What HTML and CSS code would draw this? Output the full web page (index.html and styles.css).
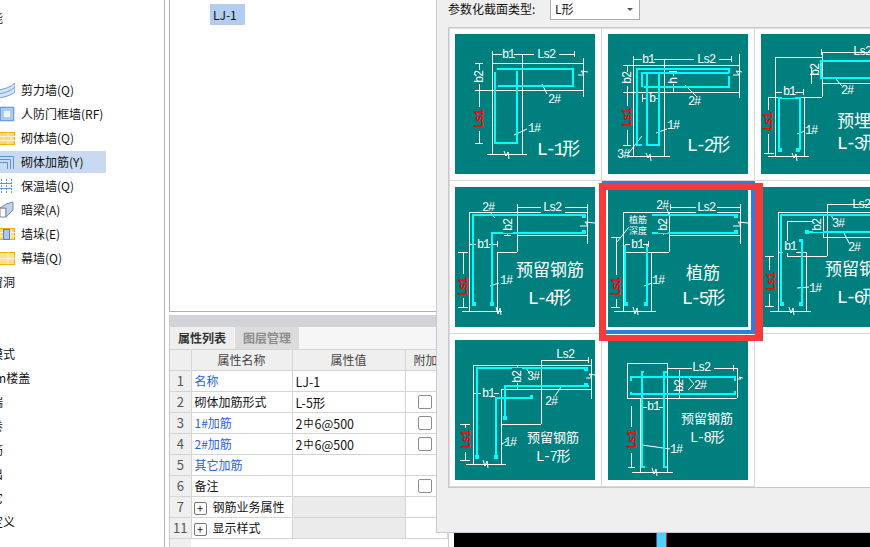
FILE: index.html
```html
<!DOCTYPE html>
<html lang="zh-CN">
<head>
<meta charset="utf-8">
<title>砌体加筋</title>
<link rel="stylesheet" href="styles.css">
</head>
<body>
<aside class="tree">
  <div class="row clip-a">能</div>
  <div class="row"></div>
  <div class="row"></div>
  <div class="row"><span class="item"><svg class="ico" viewBox="0 0 15 18"><path class="i-blue" d="M-2 9C5 8 11 6 15 2V11C11 14 6 16-2 17Z"/><path class="i-line" d="M-2 13C5 12 11 10 15 6"/></svg>剪力墙(Q)</span></div>
  <div class="row"><span class="item"><svg class="ico" viewBox="0 0 15 18"><rect class="i-frame" x="0.5" y="2.5" width="13" height="13"/><rect class="i-inner" x="3" y="5" width="8" height="8"/></svg>人防门框墙(RF)</span></div>
  <div class="row"><span class="item"><svg class="ico" viewBox="0 0 15 18"><rect class="i-brick" x="-1" y="3.500" width="15.500" height="12"/><path class="i-mortar" d="M-1 7.500H15M-1 11.500H15M8 3.500V7.500M4 7.500V11.500M11 7.500V11.500M8 11.500V15.500"/></svg>砌体墙(Q)</span></div>
  <div class="row"><span class="item sel"><svg class="ico" viewBox="0 0 15 18"><path class="i-rebar" d="M-1 3.500H13.500V16M-1 6.500H10.500V16M-1 9.500H7.500V16"/></svg>砌体加筋(Y)</span></div>
  <div class="row"><span class="item"><svg class="ico" viewBox="0 0 15 18"><path class="i-dots" d="M1.500 2V16M6.500 2V16M11.500 2V16"/><path class="i-rebar" d="M-1 6.500H12M-1 11.500H12"/></svg>保温墙(Q)</span></div>
  <div class="row"><span class="item"><svg class="ico" viewBox="0 0 15 18"><path class="i-beam" d="M0 7L6 7L6 16L0 16Z"/><path class="i-beam2" d="M0 7L6 3L13 1L13 9L6 16L6 7Z"/></svg>暗梁(A)</span></div>
  <div class="row"><span class="item"><svg class="ico" viewBox="0 0 15 18"><rect class="i-brick" x="-1" y="3.500" width="15.500" height="11"/><path class="i-mortar" d="M-1 7.500H15M-1 11H15M11 3.500V14"/><rect class="i-pier" x="3.500" y="4.500" width="6" height="10"/></svg>墙垛(E)</span></div>
  <div class="row"><span class="item"><svg class="ico" viewBox="0 0 15 18"><rect class="i-pale" x="-1" y="3.500" width="15.500" height="12"/><path class="i-mortar" d="M-1 9.500H15M8 3.500V15.500"/></svg>幕墙(Q)</span></div>
  <div class="row clip-b">门窗洞</div>
  <div class="row"></div>
  <div class="row"></div>
  <div class="row clip-d">模式</div>
  <div class="row clip-c">mm楼盖</div>
  <div class="row clip-a">端</div>
  <div class="row clip-a">卷</div>
  <div class="row clip-a">筋</div>
  <div class="row clip-a">出</div>
  <div class="row clip-a">它</div>
  <div class="row clip-d">定义</div>
</aside>

<main class="center">
  <section class="list"><span class="chip">LJ-1</span></section>
  <section class="props">
    <div class="bar"></div>
    <div class="tabs"><span class="tab on">属性列表</span><span class="tab">图层管理</span></div>
    <table class="grid-t">
      <colgroup><col class="c1"><col class="c2"><col class="c3"><col class="c4"></colgroup>
      <tr class="head"><th></th><th>属性名称</th><th>属性值</th><th class="add">附加</th></tr>
      <tr><td class="n">1</td><td class="lnk">名称</td><td class="v">LJ-1</td><td></td></tr>
      <tr><td class="n">2</td><td>砌体加筋形式</td><td class="v">L-5形</td><td class="ck"><i class="box"></i></td></tr>
      <tr><td class="n">3</td><td class="lnk">1#加筋</td><td class="v">2<span class="rb">中</span>6@500</td><td class="ck"><i class="box"></i></td></tr>
      <tr><td class="n">4</td><td class="lnk">2#加筋</td><td class="v">2<span class="rb">中</span>6@500</td><td class="ck"><i class="box"></i></td></tr>
      <tr><td class="n">5</td><td class="lnk">其它加筋</td><td class="v"></td><td></td></tr>
      <tr><td class="n">6</td><td>备注</td><td class="v"></td><td class="ck"><i class="box"></i></td></tr>
      <tr><td class="n">7</td><td class="grp"><i class="plus">+</i>钢筋业务属性</td><td class="fill"></td><td></td></tr>
      <tr><td class="n">11</td><td class="grp"><i class="plus">+</i>显示样式</td><td class="fill"></td><td></td></tr>
      <tr class="tail"><td class="n"></td><td></td><td></td><td></td></tr>
    </table>
  </section>
</main>

<div class="canvas"><div class="beam"></div></div>

<div class="dialog">
  <div class="tool">
    <span class="lbl">参数化截面类型:</span>
    <div class="combo"><span>L形</span><i class="arrow"></i></div>
  </div>
  <div class="gallery">
    <div class="cell"><svg class="dia" viewBox="0 0 140 140">
      <path class="w" d="M37 20H119M37 17V23M119 17V23M67 20V120M37 20V120M37 29H128M22 56H128M128 24V63M32 120H72M20 29H28M20 56H28M20 109H28M24 29V109"/>
      <path class="b" d="M123 41H129L126 37L133 38M49 117L51 122L53 118L54 125"/>
      <path class="l" d="M87 50L92 60M59 101L72 95"/>
      <path class="c" d="M42 35H118V52H43M40 38V109H62V37"/>
      <rect class="g" x="47" y="14" width="12" height="12"/><rect class="g" x="79" y="14" width="25" height="12"/>
      <rect class="g" x="19" y="36" width="10" height="14"/><rect class="g" x="19" y="73" width="10" height="24"/>
      <text class="t" x="47" y="24">b1</text><text class="t" x="82" y="24">Ls2</text>
      <text class="t" transform="rotate(-90 28 43)" x="28" y="43" text-anchor="middle">b2</text>
      <text class="r" transform="rotate(-90 28 85)" x="28" y="85" text-anchor="middle">Ls1</text>
      <text class="t" x="93" y="69">2#</text><text class="t" x="73" y="98">1#</text>
      <text class="h" x="82" y="121">L-1形</text>
    </svg></div>

    <div class="cell"><svg class="dia" viewBox="0 0 140 140">
      <path class="w" d="M25 25H123M25 22V28M123 22V28M25 25V122M56 25V122M17 31H131M17 58H131M131 20V64M20 122H62M15 31H23M15 58H23M15 111H23M19 31V111M34 64H51M34 60V68M65 37V58M61 37H69"/>
      <path class="b" d="M125 41H131L128 37L134 38M38 119L40 124L42 120L43 127"/>
      <path class="l" d="M77 51L89 63M20 120L34 102M48 99L59 95"/>
      <path class="c" d="M121 39V35H29V111H34M34 53V39H121M121 42V53H36M39 40V111H51V40"/>
      <rect class="g" x="34" y="19" width="12" height="12"/><rect class="g" x="86" y="19" width="25" height="12"/>
      <rect class="g" x="14" y="38" width="10" height="14"/><rect class="g" x="14" y="72" width="10" height="24"/>
      <rect class="g" x="40" y="59" width="7" height="10"/><rect class="g" x="61" y="42" width="8" height="8"/>
      <text class="t" x="34" y="29">b1</text><text class="t" x="89" y="29">Ls2</text>
      <text class="t" transform="rotate(-90 23 44)" x="23" y="44" text-anchor="middle">b2</text>
      <text class="r" transform="rotate(-90 23 84)" x="23" y="84" text-anchor="middle">Ls1</text>
      <text class="t" x="41" y="68">b</text><text class="t" transform="rotate(-90 69 47)" x="69" y="47" text-anchor="middle">h</text>
      <text class="t" x="80" y="71">2#</text><text class="t" x="59" y="95">1#</text><text class="t" x="9" y="124">3#</text>
      <text class="h" x="79" y="117">L-2形</text>
    </svg></div>

    <div class="cell"><svg class="dia" viewBox="0 0 140 140">
      <path class="w" d="M60 18H140M60 15V21M14 23H61M61 18V63M14 63H61M14 23V122M43 63V122M7 122H48M61 49H140M14 58H42M42 55V61M7 63H14M3 119H13M7 63V119M50 35V50"/>
      <path class="b" d="M31 119L33 124L35 120L36 127"/>
      <path class="l" d="M74 44L81 52M36 100L44 97"/>
      <path class="c" d="M140 27H60V44H140M18 116V64H39V116"/>
      <rect class="f" x="17" y="114" width="4" height="4"/><rect class="f" x="35" y="114" width="4" height="4"/>
      <rect class="g" x="21" y="52" width="13" height="12"/>
      <rect class="g" x="2" y="76" width="10" height="24"/>
      <text class="t" x="92" y="21">Ls2</text><text class="t" x="22" y="61">b1</text>
      <text class="t" transform="rotate(-90 58 36)" x="58" y="36" text-anchor="middle">b2</text>
      <text class="r" transform="rotate(-90 11 88)" x="11" y="88" text-anchor="middle">Ls1</text>
      <text class="t" x="80" y="60">2#</text><text class="t" x="44" y="100">1#</text>
      <text class="cn" x="76" y="93">预埋钢筋</text><text class="h" x="76" y="115">L-3形</text>
    </svg></div>

    <div class="cell sel-cell"><svg class="dia" viewBox="0 0 140 140">
      <path class="w" d="M14 25H132M14 25V124M62 20V65M42 65H62M42 65V124M62 48H132M7 124H47M132 18V57M62 20H132M62 17V23M132 17V23M15 57H42M42 54V60M3 65H13M3 120H13M8 65V120M52 40V48M49 48H56"/>
      <path class="b" d="M125 39H133L130 35L140 36M41 120L43 127L45 121L46 128"/>
      <path class="l" d="M35 25L40 31M35 99L44 96"/>
      <path class="c k" d="M18 118V28H130M37 118V46H130"/>
      <rect class="f" x="17" y="115" width="4" height="4"/><rect class="f" x="35" y="115" width="4" height="4"/>
      <rect class="f" x="127" y="27" width="4" height="4"/><rect class="f" x="127" y="43" width="4" height="4"/>
      <rect class="g" x="21" y="51" width="13" height="12"/><rect class="g" x="86" y="14" width="24" height="12"/>
      <rect class="g" x="3" y="87" width="10" height="24"/><rect class="g" x="48" y="31" width="10" height="15"/>
      <text class="t" x="27" y="24">2#</text><text class="t" x="88" y="24">Ls2</text><text class="t" x="22" y="61">b1</text>
      <text class="t" transform="rotate(-90 57 38)" x="57" y="38" text-anchor="middle">b2</text>
      <text class="r" transform="rotate(-90 12 100)" x="12" y="100" text-anchor="middle">Ls1</text>
      <text class="t" x="45" y="97">1#</text>
      <text class="cn" x="61" y="89">预留钢筋</text><text class="h" x="73" y="117">L-4形</text>
    </svg></div>

    <div class="cell selected"><svg class="dia" viewBox="0 0 140 140">
      <path class="w" d="M15 25H132M15 25V124M61 25V65M15 65H61M43 65V124M61 48H132M6 124H48M132 18V57M62 20H132M62 17V23M132 17V23M17 57H40M40 54V60M3 50H12M3 120H12M8 50V120M55 40V48"/>
      <path class="b" d="M125 39H133L130 35L140 36M25 120L27 127L29 121L30 128"/>
      <path class="l" d="M9 55L21 40M36 99L44 96M59 22L62 30"/>
      <path class="c k" d="M44 28H129M44 46H129M17 58V118M39 58V118"/>
      <rect class="f" x="16" y="115" width="4" height="4"/><rect class="f" x="36" y="115" width="4" height="4"/>
      <rect class="f" x="126" y="27" width="4" height="4"/><rect class="f" x="126" y="43" width="4" height="4"/>
      <rect class="g" x="22" y="51" width="13" height="12"/><rect class="g" x="88" y="14" width="21" height="12"/>
      <rect class="g" x="3" y="88" width="10" height="24"/><rect class="g" x="50" y="31" width="10" height="15"/>
      <text class="t" x="48" y="22">2#</text><text class="t" x="89" y="24">Ls2</text><text class="t" x="23" y="61">b1</text>
      <text class="s" x="21" y="36">植筋</text><text class="s" x="21" y="47">深度</text>
      <text class="t" transform="rotate(-90 59 38)" x="59" y="38" text-anchor="middle">b2</text>
      <text class="r" transform="rotate(-90 12 100)" x="12" y="100" text-anchor="middle">Ls1</text>
      <text class="t" x="44" y="97">1#</text>
      <text class="cn" x="78" y="92">植筋</text><text class="h" x="74" y="117">L-5形</text>
    </svg><div class="mark"></div></div>

    <div class="cell"><svg class="dia" viewBox="0 0 140 140">
      <path class="w" d="M17 25H140M17 25V124M66 17V69M26 69H66M26 34V69M26 34H52M17 65H45M45 65V124M62 28V50H140M9 124H50M66 17H140M4 69H13M4 119H13M8 69V119"/>
      <path class="b" d="M28 120L30 126L32 121L33 128"/>
      <path class="l" d="M70 28L73 33M83 46L88 56M36 101L48 100"/>
      <path class="c k" d="M140 28H20V118M45 45H140M41 53V118"/>
      <rect class="f" x="19" y="115" width="4" height="4"/><rect class="f" x="38" y="115" width="4" height="4"/>
      <rect class="f" x="44" y="43" width="4" height="4"/><rect class="f" x="38" y="52" width="4" height="3"/>
      <rect class="g" x="22" y="54" width="13" height="12"/><rect class="g" x="52" y="30" width="10" height="15"/>
      <rect class="g" x="4" y="83" width="10" height="24"/>
      <text class="t" x="91" y="21">Ls2</text><text class="t" x="71" y="40">3#</text><text class="t" x="87" y="64">2#</text>
      <text class="t" x="23" y="63">b1</text>
      <text class="t" transform="rotate(-90 60 38)" x="60" y="38" text-anchor="middle">b2</text>
      <text class="r" transform="rotate(-90 14 95)" x="14" y="95" text-anchor="middle">Ls1</text>
      <text class="t" x="48" y="105">1#</text>
      <text class="cn" x="64" y="88">预留钢筋</text><text class="h" x="76" y="116">L-6形</text>
    </svg></div>

    <div class="cell"><svg class="dia" viewBox="0 0 140 140">
      <path class="w" d="M18 25H136M18 25V124M46 49H136M46 49V124M86 20V84M46 84H86M11 124H51M136 19V59M86 20H133M133 17V23M5 84H15M5 120H15M10 84V120M62 25V49M18 53H44"/>
      <path class="b" d="M131 38H137L134 34L140 35M28 120L30 126L32 121L33 128"/>
      <path class="l" d="M71 28L75 34M106 47L100 56M47 104L52 101"/>
      <path class="c k" d="M22 118V28H133M50 78V46H134M41 117V58H77"/>
      <rect class="f" x="20" y="115" width="4" height="4"/><rect class="f" x="39" y="115" width="4" height="4"/>
      <rect class="f" x="48" y="76" width="4" height="4"/><rect class="f" x="129" y="27" width="4" height="4"/>
      <rect class="f" x="129" y="43" width="4" height="4"/><rect class="f" x="75" y="55" width="3" height="4"/>
      <rect class="g" x="26" y="47" width="13" height="12"/><rect class="g" x="57" y="28" width="10" height="15"/>
      <rect class="g" x="5" y="88" width="10" height="24"/>
      <text class="t" x="101" y="18">Ls2</text><text class="t" x="72" y="40">3#</text><text class="t" x="90" y="65">2#</text>
      <text class="t" x="27" y="57">b1</text>
      <text class="t" transform="rotate(-90 66 37)" x="66" y="37" text-anchor="middle">b2</text>
      <text class="r" transform="rotate(-90 15 100)" x="15" y="100" text-anchor="middle">Ls1</text>
      <text class="t" x="49" y="106">1#</text>
      <text class="cm" x="72" y="102">预留钢筋</text><text class="hm" x="81" y="121">L-7形</text>
    </svg></div>

    <div class="cell"><svg class="dia" viewBox="0 0 140 140">
      <rect class="o" x="19.500" y="23.500" width="40" height="35"/>
      <path class="w" d="M32 58V132M59 58V132M24 132H65M59 28H129M59 58H129M129 28V58M125 25V31M23 66V127M20 127H27M32 67H56M71 30V58"/>
      <path class="b" d="M44 128L46 134L48 129L49 136M129 39H133L131 37L135 38"/>
      <path class="l" d="M34 105L62 109M80 37L86 44M80 50L86 44"/>
      <path class="c k" d="M23 41V37H127V41M23 52V54H127V51M36 32H34V127H37M59 32H56V127H59"/>
      <rect class="g" x="39" y="60" width="12" height="12"/><rect class="g" x="84" y="22" width="22" height="11"/>
      <rect class="g" x="19" y="87" width="10" height="26"/>
      <text class="t" x="84" y="31">Ls2</text><text class="t" x="86" y="49">2#</text><text class="t" x="39" y="70">b1</text>
      <text class="t" transform="rotate(-90 75 46)" x="75" y="46" text-anchor="middle">b2</text>
      <text class="r" transform="rotate(-90 28 100)" x="28" y="100" text-anchor="middle">Ls1</text>
      <text class="t" x="62" y="113">1#</text>
      <text class="cm" x="73" y="83">预留钢筋</text><text class="hm" x="82" y="102">L-8形</text>
    </svg></div>
    <div class="cell empty"></div>
  </div>
</div>
</body>
</html>
```
FILE: styles.css
```css
* { box-sizing: border-box; }
html, body { margin: 0; height: 100%; }
body {
  width: 870px; height: 547px; overflow: hidden; position: relative;
  display: flex; background: #fff; color: #111;
  font: 12px/1.2 "Noto Sans CJK SC", "Liberation Sans", sans-serif;
}

/* left tree */
.tree {
  flex: 0 0 165px; height: 547px; overflow: hidden;
  border-right: 1px solid #b4b4b4; padding-top: 6px;
}
.row { height: 24px; line-height: 24px; white-space: nowrap; display: flex; align-items: center; }
.item { display: flex; align-items: center; height: 22px; width: 106px; }
.sel { background: #c8d9f0; }
.ico { flex: 0 0 15px; width: 15px; height: 18px; margin-right: 6px; overflow: hidden; }
.clip-a { margin-left: -9px; }
.clip-b { margin-left: -21px; }
.clip-c { margin-left: -16px; }
.clip-d { margin-left: -9px; }
.i-blue { fill: #d6e4f6; stroke: #6d9fdc; }
.i-line { fill: none; stroke: #6d9fdc; }
.i-frame { fill: #cfe0f6; stroke: #6d9fdc; stroke-width: 1.6; }
.i-inner { fill: #eef4fc; stroke: #7da9e0; }
.i-brick { fill: #ffd968; stroke: #f7ae00; }
.i-pale { fill: #ffe08e; stroke: #f7ae00; }
.i-mortar { fill: none; stroke: #f9f2d8; }
.i-rebar { fill: none; stroke: #5d93d6; }
.i-dots { fill: none; stroke: #5d93d6; stroke-dasharray: 2 1; }
.i-beam { fill: #fff; stroke: #7e8b9c; }
.i-beam2 { fill: #bcd3ee; stroke: #7e8b9c; }
.i-pier { fill: #a9c8ec; stroke: #4f86c8; }

/* middle column */
.center { flex: 0 0 288px; height: 547px; padding: 0 5px 0 4px; }
.list {
  height: 312px; background: #fff;
  border-left: 1px solid #b0b0b0; border-bottom: 1px solid #b0b0b0;
  padding: 4px 0 0 40px;
}
.chip {
  display: block; width: 35px; height: 21px; line-height: 21px;
  padding-left: 3px; background: #b3cdee; font-size: 12px;
}
.props { margin-top: 3px; border-left: 1px solid #ccc; border-right: 1px solid #ccc; background: #fff; }
.bar { height: 12px; background: #d2d3d8; }
.tabs { height: 22px; display: flex; gap: 1px; background: #f6f6f6; }
.tab {
  width: 64px; text-align: center; line-height: 22px; font-weight: 700;
  background: #dcdcdc; color: #8c8c8c;
}
.tab.on { background: #eeeeee; color: #333; }
.grid-t { border-collapse: collapse; table-layout: fixed; width: 277px; }
.c1 { width: 21px; } .c2 { width: 101px; } .c3 { width: 113px; } .c4 { width: 42px; }
.grid-t td, .grid-t th {
  height: 21px; padding: 0 0 0 3px; border: 1px solid #d4d4d4;
  font-weight: 400; white-space: nowrap; overflow: hidden;
}
.grid-t td:first-child, .grid-t th:first-child { border-left: 0; }
.grid-t td.v { padding-left: 3px; font-size: 12.5px; }
.head th { background: #efefef; color: #444; text-align: center; padding: 0; }
.grid-t .head .add { text-align: left; padding-left: 8px; }
.grid-t .n { background: #efefef; color: #555; text-align: center; padding: 0; font-size: 13px; }
.lnk { color: #2a62d8; }
.grid-t .fill { background: #ebebeb; }
.ck { text-align: left; }
.box {
  display: block; width: 14px; height: 14px; margin-left: 9px;
  border: 1px solid #8c8c8c; border-radius: 2px; background: #fff;
}
.grid-t td.grp { padding-left: 2px; }
.plus {
  display: inline-block; width: 13px; height: 13px; line-height: 10px; margin-right: 6px;
  border: 1px solid #777; border-radius: 2px; text-align: center; font-style: normal;
  vertical-align: -1px; font-size: 11px;
}
.rb { font-size: 10px; position: relative; top: -2px; margin: 0 1px; }
.grid-t .tail td { height: 9px; border: 0; }

/* black model view */
.canvas { flex: 1; height: 547px; background: #000; padding-left: 202px; }
.beam { width: 11px; height: 100%; background: #50cdfa; border-left: 1px solid #4a5a70; border-right: 1px solid #e01818; }

/* dialog */
.dialog {
  position: absolute; left: 436px; top: 0; width: 434px; height: 533px; overflow: hidden;
  background: #efefef; border-left: 1px solid #c3c8da; border-bottom: 1px solid #c3c8da;
}
.tool { height: 27px; display: flex; align-items: flex-start; gap: 12px; padding-left: 11px; }
.lbl { line-height: 18px; width: 90px; white-space: nowrap; }
.combo {
  display: flex; justify-content: space-between; align-items: center;
  width: 90px; height: 21px; margin-top: -1px; padding: 0 6px 0 4px;
  background: #fff; border: 1px solid #aaa;
}
.arrow { width: 0; height: 0; border: 3px solid transparent; border-top: 3px solid #555; border-bottom: 0; }
.gallery {
  margin-left: 11px; width: 460px; height: 461px;
  display: grid; grid-template-columns: repeat(3, 153px); grid-auto-rows: 153px;
  background: #fff; border: 1px solid #c8c8c8; box-shadow: inset 1px 1px 0 #dedede;
}
.cell { padding: 6px 0 0 6px; border-right: 1px solid #d8d8d8; border-bottom: 1px solid #d8d8d8; }
.cell.empty { border: 0; }
.cell.selected {
  position: relative; border-color: #2f7de1; box-shadow: inset 0 0 0 3px #2f7de1;
}
.mark {
  position: absolute; left: -3px; top: 2px; width: 164px; height: 158px;
  border: solid #f53a3a; border-width: 7px 8px 6px 7px;
}
.dia { display: block; width: 140px; height: 140px; background: #007f7f; }

/* diagram strokes and labels */
.w, .o, .b, .l { fill: none; stroke: #fff; stroke-width: 1; }
.w, .o { shape-rendering: crispEdges; }
.c { fill: none; stroke: #00ffff; stroke-width: 2; shape-rendering: crispEdges; }
.c.k { stroke-width: 2.6; }
.f { fill: #00ffff; }
.g { fill: #007f7f; }
.t, .r, .h, .hm, .cn, .cm, .s { font-family: "Liberation Mono", "Noto Sans CJK SC", monospace; }
.t { fill: #fff; font-size: 12px; letter-spacing: -1.2px; }
.r { fill: #ff0000; font-size: 12px; font-weight: 700; letter-spacing: -1.2px; }
.h { fill: #fff; font-size: 18px; letter-spacing: -2.4px; }
.hm { fill: #fff; font-size: 14px; letter-spacing: -1.6px; }
.cn { fill: #fff; font-size: 17px; }
.cm { fill: #fff; font-size: 13px; }
.s { fill: #fff; font-size: 9px; }
```
